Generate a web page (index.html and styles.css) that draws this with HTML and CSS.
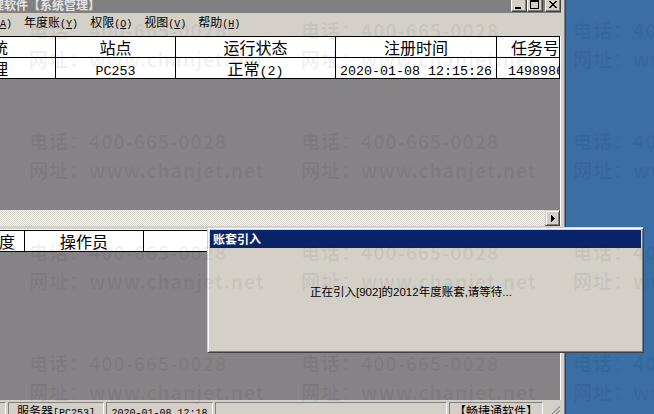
FILE: index.html
```html
<!DOCTYPE html>
<html lang="zh-CN">
<head>
<meta charset="utf-8">
<title>系统管理</title>
<link rel="stylesheet" href="styles.css">
</head>
<body>
<div class="app">
  <div class="titlebar">
    <span class="title">管理软件【系统管理】</span>
    <div class="tbtns">
      <span class="tbtn"><svg width="14" height="12" viewBox="0 0 14 12"><rect x="3" y="8" width="6" height="2"/></svg></span>
      <span class="tbtn"><svg width="14" height="12" viewBox="0 0 14 12"><path d="M2 1h9v9H2z M3 3v6h7V3z" fill-rule="evenodd"/></svg></span>
      <span class="tbtn close"><svg width="14" height="12" viewBox="0 0 14 12"><path transform="translate(3 2)" d="M0 0h2v1H0z M6 0h2v1H6z M1 1h2v1H1z M5 1h2v1H5z M2 2h4v1H2z M3 3h2v1H3z M2 4h4v1H2z M1 5h2v1H1z M5 5h2v1H5z M0 6h2v1H0z M6 6h2v1H6z"/></svg></span>
    </div>
  </div>
  <div class="menubar">
    <span class="mi">系统<span class="a">(<u>A</u>)</span></span>
    <span class="mi">年度账<span class="a">(<u>Y</u>)</span></span>
    <span class="mi">权限<span class="a">(<u>O</u>)</span></span>
    <span class="mi">视图<span class="a">(<u>V</u>)</span></span>
    <span class="mi">帮助<span class="a">(<u>H</u>)</span></span>
  </div>
  <div class="pane pane1">
    <div class="grid g1 head">
      <div class="c c1">系统</div>
      <div class="c">站点</div>
      <div class="c">运行状态</div>
      <div class="c">注册时间</div>
      <div class="c c5h">任务号</div>
    </div>
    <div class="grid g1">
      <div class="c c1">管理</div>
      <div class="c"><span class="m">PC253</span></div>
      <div class="c">正常<span class="m">(2)</span></div>
      <div class="c"><span class="m">2020-01-08 12:15:26</span></div>
      <div class="c c5r"><span class="m">1498986</span></div>
    </div>
  </div>
  <div class="hscroll">
    <div class="track"></div>
    <div class="sbtn"><svg width="4" height="7" viewBox="0 0 4 7"><path d="M0 0h1v7H0z M1 1h1v5H1z M2 2h1v3H2z M3 3h1v1H3z"/></svg></div>
  </div>
  <div class="band"></div>
  <div class="pane pane2">
    <div class="grid g2 head">
      <div class="c c1b">年度</div>
      <div class="c">操作员</div>
      <div class="c"></div>
    </div>
  </div>
  <div class="status">
    <div class="sp w1"></div>
    <div class="sp w2">服务器<span class="a">[PC253]</span></div>
    <div class="sp w3"><span class="a">2020-01-08 12:18</span></div>
    <div class="sp w4"></div>
    <div class="sp w5">【畅捷通软件】</div>
    <div class="grip"><svg width="16" height="14" viewBox="0 0 16 14"><path d="M15 3L4 14M15 7L8 14M15 11L12 14" stroke="#fff" stroke-width="1"/><path d="M15 4L5 14M15 8L9 14M15 12L13 14" stroke="#808080" stroke-width="1.2"/></svg></div>
  </div>
</div>

<div class="dialog">
  <div class="dtitle">账套引入</div>
  <div class="dbody">正在引入[902]的2012年度账套,请等待...</div>
</div>

<div class="wm">
  <div class="wmi">电话：400-665-0028<br>网址：www.chanjet.net</div>
  <div class="wmi">电话：400-665-0028<br>网址：www.chanjet.net</div>
  <div class="wmi">电话：400-665-0028<br>网址：www.chanjet.net</div>
  <div class="wmi">电话：400-665-0028<br>网址：www.chanjet.net</div>
  <div class="wmi">电话：400-665-0028<br>网址：www.chanjet.net</div>
  <div class="wmi">电话：400-665-0028<br>网址：www.chanjet.net</div>
  <div class="wmi">电话：400-665-0028<br>网址：www.chanjet.net</div>
  <div class="wmi">电话：400-665-0028<br>网址：www.chanjet.net</div>
  <div class="wmi">电话：400-665-0028<br>网址：www.chanjet.net</div>
  <div class="wmi">电话：400-665-0028<br>网址：www.chanjet.net</div>
  <div class="wmi">电话：400-665-0028<br>网址：www.chanjet.net</div>
  <div class="wmi">电话：400-665-0028<br>网址：www.chanjet.net</div>
</div>
</body>
</html>
```

FILE: styles.css
```css
html, body {
  margin: 0;
  padding: 0;
}
body {
  width: 654px;
  height: 414px;
  overflow: hidden;
  position: relative;
  background: #3a6ea5;
  font-family: "Noto Sans CJK SC", sans-serif;
  color: #000;
}

/* main application window (partly off-screen) */
.app {
  position: absolute;
  left: -40px;
  top: -8px;
  width: 606px;
  height: 440px;
  box-sizing: border-box;
  background: #d4d0c8;
  border: 1px solid;
  border-color: #d4d0c8 #404040 #404040 #d4d0c8;
  box-shadow: inset 1px 1px #fff, inset -1px -1px #808080;
  padding: 3px 4px 0 3px;
  display: flex;
  flex-direction: column;
}

.titlebar {
  height: 17px;
  flex: none;
  background: #808080;
  display: flex;
  align-items: flex-start;
}
.title {
  flex: 1;
  font-weight: 700;
  font-size: 12px;
  line-height: 17px;
  color: #e4e4e4;
  padding-left: 16px;
  white-space: nowrap;
}
.tbtns {
  display: flex;
  padding-top: 2px;
}
.tbtn {
  width: 16px;
  height: 14px;
  box-sizing: border-box;
  background: #d4d0c8;
  border: 1px solid;
  border-color: #fff #404040 #404040 #fff;
  box-shadow: inset -1px -1px #808080;
  display: block;
}
.tbtn svg {
  display: block;
  fill: #000;
  shape-rendering: crispEdges;
}
.tbtn.close {
  margin-left: 2px;
}

.menubar {
  height: 23px;
  flex: none;
  box-sizing: border-box;
  padding-bottom: 2px;
  display: flex;
  align-items: center;
  font-size: 12px;
  line-height: 16px;
  white-space: nowrap;
}
.mi {
  padding: 0 6px;
}
.a {
  font-family: "Liberation Mono", monospace;
  font-size: 10px;
}

.pane {
  flex: none;
  background: #868386;
  border-right: 1px solid #fff;
  overflow: hidden;
}
.pane1 {
  height: 174px;
}
.pane2 {
  height: 170px;
}

.grid {
  display: grid;
  background: #fff;
}
.g1 {
  grid-template-columns: 92px 120px 160px 161px 63px;
}
.g2 {
  grid-template-columns: 61px 119px 1fr;
}
.c {
  box-sizing: border-box;
  height: 21px;
  border-right: 1px solid #000;
  border-bottom: 1px solid #000;
  font-size: 16px;
  line-height: 20px;
  text-align: center;
  white-space: nowrap;
  overflow: hidden;
}
.head .c {
  height: 22px;
  border-top: 1px solid #000;
}
.c1 {
  text-align: left;
  padding-left: 12px;
}
.c1b {
  text-align: left;
  padding-left: 19px;
}
.c5h {
  text-align: right;
}
.c5r {
  text-align: left;
  padding-left: 11px;
}
.m {
  font-family: "Liberation Mono", monospace;
  font-size: 13.333px;
}

.hscroll {
  height: 16px;
  flex: none;
  display: flex;
  border-right: 1px solid #fff;
}
.track {
  flex: 1;
  background-image: repeating-conic-gradient(#fff 0 25%, #d4d0c8 0 50%);
  background-size: 2px 2px;
}
.sbtn {
  width: 15px;
  box-sizing: border-box;
  background: #d4d0c8;
  border: 1px solid;
  border-color: #d4d0c8 #404040 #404040 #d4d0c8;
  box-shadow: inset 1px 1px #fff, inset -1px -1px #808080;
  display: flex;
  align-items: center;
  justify-content: center;
}
.sbtn svg {
  display: block;
  fill: #000;
  shape-rendering: crispEdges;
}

.band {
  height: 4px;
  flex: none;
  box-sizing: border-box;
  border-bottom: 1px solid #fff;
}

.status {
  flex: none;
  display: flex;
  gap: 2px;
  padding-top: 2px;
  font-size: 12px;
}
.sp {
  box-sizing: border-box;
  height: 20px;
  border: 1px solid;
  border-color: #808080 #fff #fff #808080;
  padding-top: 1px;
  line-height: 14px;
  text-align: center;
  white-space: nowrap;
  overflow: hidden;
}
.w1 { width: 42px; }
.w2 { width: 96px; }
.w3 { width: 107px; }
.w4 { width: 232px; }
.w5 { width: 94px; }
.grip {
  width: 16px;
}
.grip svg {
  display: block;
}

/* modal dialog */
.dialog {
  position: absolute;
  left: 207px;
  top: 227px;
  width: 437px;
  height: 126px;
  box-sizing: border-box;
  background: #d4d0c8;
  border: 1px solid;
  border-color: #d4d0c8 #404040 #404040 #d4d0c8;
  box-shadow: inset 1px 1px #fff, inset -1px -1px #808080;
  padding: 2px;
}
.dtitle {
  height: 18px;
  background: #0a246a;
  color: #fff;
  font-weight: 700;
  font-size: 12px;
  line-height: 18px;
  padding-left: 3px;
}
.dbody {
  padding: 37px 0 0 100px;
  font-family: "Liberation Sans", "Noto Sans CJK SC", sans-serif;
  font-size: 11.5px;
  line-height: 14px;
  white-space: nowrap;
}

/* watermark overlay */
.wm {
  position: absolute;
  left: 29px;
  top: 15px;
  display: grid;
  grid-template-columns: repeat(3, 272px);
  grid-auto-rows: 111px;
  pointer-events: none;
  z-index: 10;
  color: rgba(0, 0, 0, 0.06);
  font-family: "Noto Sans CJK SC", sans-serif;
  font-weight: 700;
  font-size: 19px;
  letter-spacing: 1px;
  line-height: 29px;
  white-space: nowrap;
}
```
